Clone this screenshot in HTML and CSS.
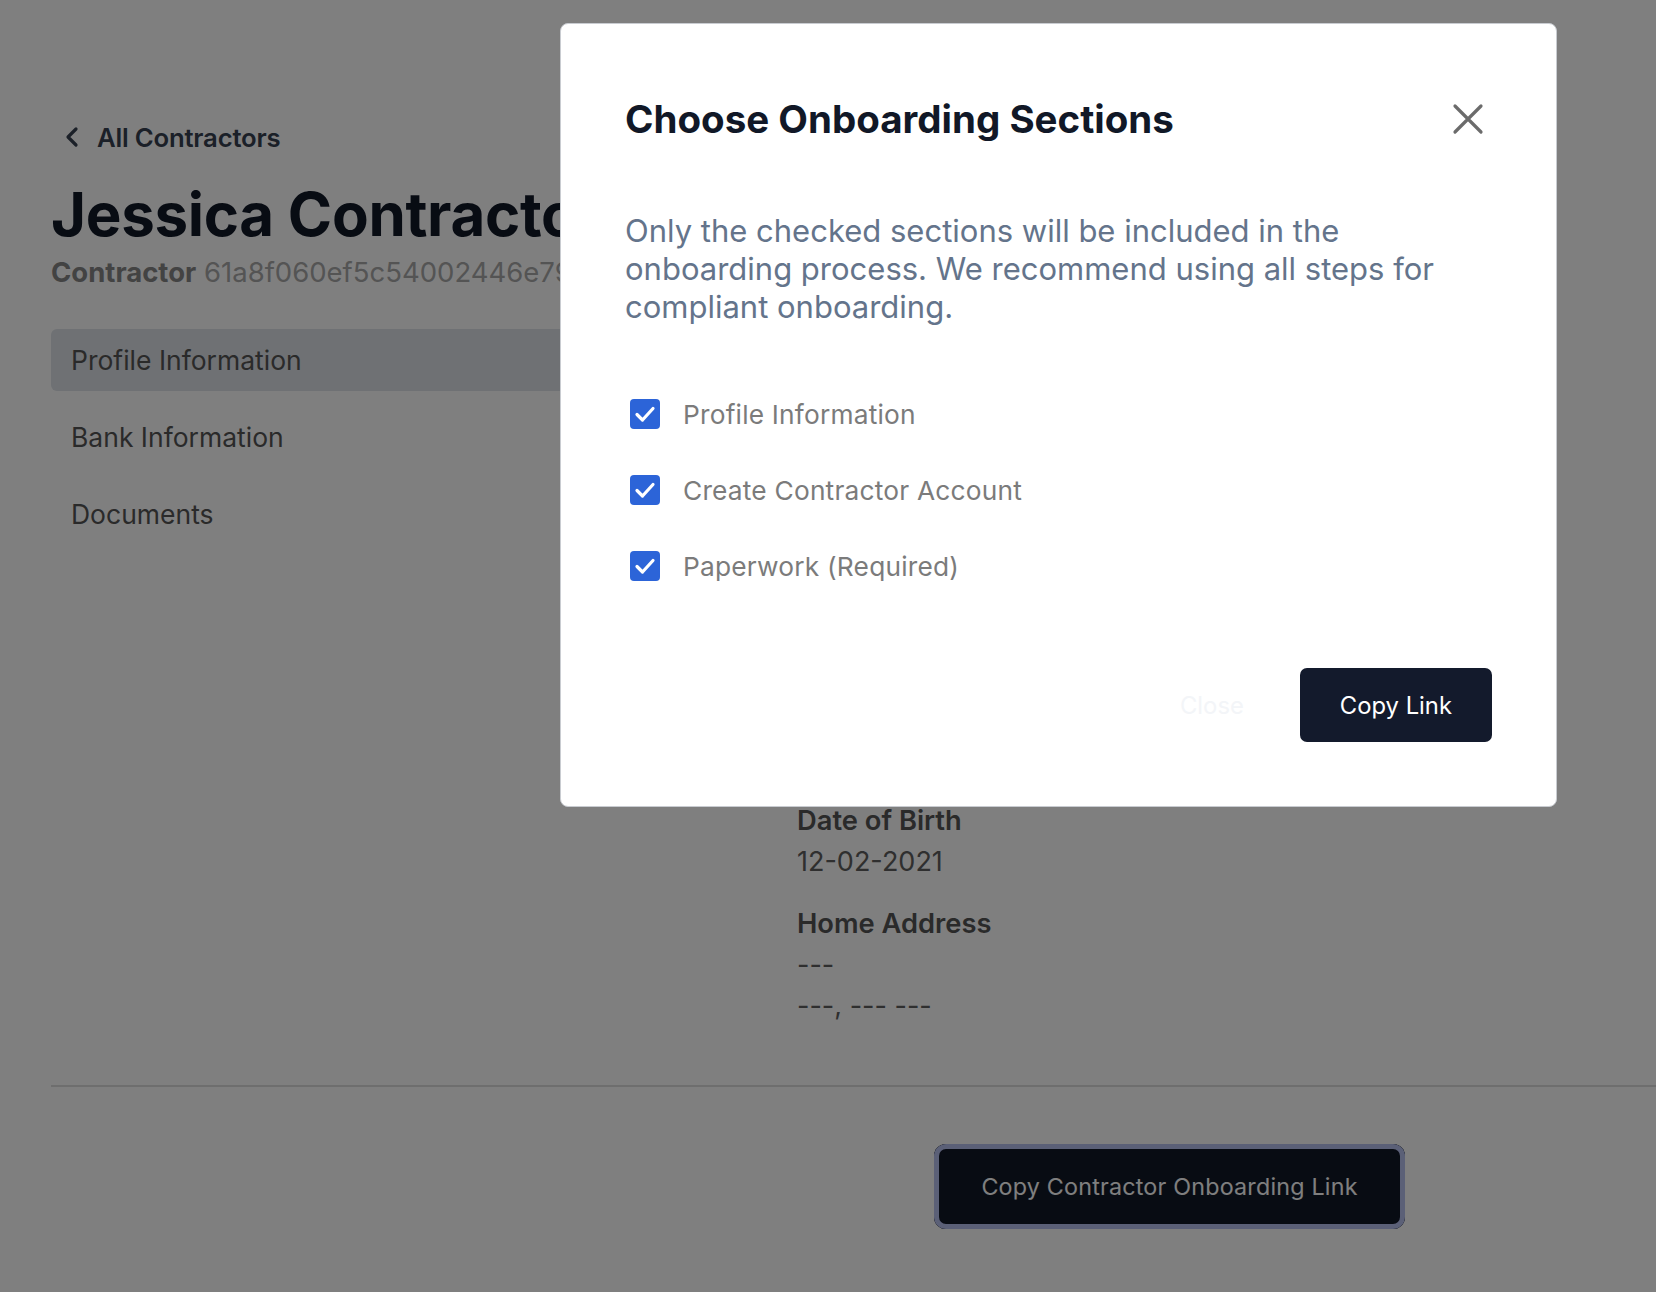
FILE: index.html
```html
<!DOCTYPE html>
<html lang="en">
<head>
<meta charset="utf-8">
<title>Jessica Contractor</title>
<link rel="stylesheet" href="styles.css">
</head>
<body>
<div class="page">
  <a class="back" href="#">
    <svg class="back-icon" viewBox="0 0 16 22" width="16" height="22"><path d="M12 3 L4 11 L12 19" fill="none" stroke="currentColor" stroke-width="3.2" stroke-linecap="round" stroke-linejoin="round"/></svg>
    <span>All Contractors</span>
  </a>
  <h1 class="name">Jessica Contractor</h1>
  <div class="sub"><strong>Contractor</strong> 61a8f060ef5c54002446e79b</div>

  <div class="main">
    <nav class="side">
      <div class="nav-item active">Profile Information</div>
      <div class="nav-item">Bank Information</div>
      <div class="nav-item">Documents</div>
    </nav>
    <section class="details">
      <div class="field"><div class="label">Date of Birth</div><div class="value">12-02-2021</div></div>
      <div class="field"><div class="label">Home Address</div><div class="value">---</div><div class="value">---, --- ---</div></div>
    </section>
  </div>

  <hr class="divider">
  <div class="footer">
    <button class="primary-big">Copy Contractor Onboarding Link</button>
  </div>
</div>

<div class="overlay"></div>

<div class="modal" role="dialog">
  <div class="modal-head">
    <h2 class="modal-title">Choose Onboarding Sections</h2>
    <button class="x-btn" aria-label="Close">
      <svg viewBox="0 0 40 40" width="40" height="40"><path d="M7 7 L33 33 M33 7 L7 33" fill="none" stroke="#6b6b6b" stroke-width="3.2" stroke-linecap="round"/></svg>
    </button>
  </div>
  <p class="modal-desc">Only the checked sections will be included in the onboarding process. We recommend using all steps for compliant onboarding.</p>
  <div class="checks">
    <label class="check-row"><span class="box"><svg viewBox="0 0 30 30" width="30" height="30"><path d="M7 15.5 L12.5 21 L23 9.5" fill="none" stroke="#fff" stroke-width="3.2" stroke-linecap="round" stroke-linejoin="round"/></svg></span><span class="check-label">Profile Information</span></label>
    <label class="check-row"><span class="box"><svg viewBox="0 0 30 30" width="30" height="30"><path d="M7 15.5 L12.5 21 L23 9.5" fill="none" stroke="#fff" stroke-width="3.2" stroke-linecap="round" stroke-linejoin="round"/></svg></span><span class="check-label">Create Contractor Account</span></label>
    <label class="check-row"><span class="box"><svg viewBox="0 0 30 30" width="30" height="30"><path d="M7 15.5 L12.5 21 L23 9.5" fill="none" stroke="#fff" stroke-width="3.2" stroke-linecap="round" stroke-linejoin="round"/></svg></span><span class="check-label">Paperwork (Required)</span></label>
  </div>
  <div class="modal-foot">
    <button class="ghost">Close</button>
    <button class="primary">Copy Link</button>
  </div>
</div>
</body>
</html>
```

FILE: styles.css
```css
* { box-sizing: border-box; }
html, body { margin: 0; padding: 0; }
body {
  background: #ffffff;
  font-family: Inter, "Noto Sans", "Liberation Sans", sans-serif;
  width: 1656px;
  height: 1292px;
  overflow: hidden;
}
.page {
  padding: 121px 0 0 51px;
}
.back {
  display: flex;
  align-items: center;
  gap: 17px;
  height: 32px;
  color: #374151;
  text-decoration: none;
  font-size: 25.7px;
  font-weight: 600;
  letter-spacing: -0.2px;
  margin-left: 13px;
}
.back-icon { display: block; }
.name {
  margin: 26px 0 0;
  font-size: 60px;
  line-height: 70px;
  font-weight: 700;
  color: #111827;
  letter-spacing: -0.3px;
  white-space: nowrap;
}
.sub {
  margin-top: 6px;
  font-size: 27.5px;
  line-height: 34px;
  color: #a8a8a8;
  white-space: nowrap;
}
.sub strong { color: #868686; font-weight: 700; }
.main {
  display: flex;
  margin-top: 40px;
}
.side {
  width: 680px;
  display: flex;
  flex-direction: column;
  gap: 15px;
  flex: none;
}
.nav-item {
  height: 62px;
  display: flex;
  align-items: center;
  padding-left: 20px;
  font-size: 26.5px;
  color: #555555;
  border-radius: 6px;
}
.nav-item.active { background: #dee2e8; }
.details {
  margin-left: 66px;
  padding-top: 475px;
  display: flex;
  flex-direction: column;
  gap: 28px;
}
.label {
  font-size: 27.3px;
  line-height: 34px;
  font-weight: 600;
  color: #555555;
}
.value {
  margin-top: 7px;
  font-size: 27px;
  line-height: 34px;
  color: #5e5e5e;
}
.divider {
  border: none;
  border-top: 2px solid #dcdcdc;
  margin: 62px 0 0;
}
.footer {
  display: flex;
  padding: 57px 0 0 883px;
}
.primary-big {
  width: 471px;
  height: 85px;
  background: #111827;
  color: #ffffff;
  border: none;
  border-radius: 12px;
  box-shadow: 0 0 0 5px #b6c0ee inset, 0 0 0 6px #111827 inset;
  font-family: inherit;
  font-size: 23.3px;
  letter-spacing: 0.2px;
}
.overlay {
  position: fixed;
  inset: 0;
  background: rgba(0, 0, 0, 0.5);
}
.modal {
  position: fixed;
  left: 560px;
  top: 23px;
  width: 997px;
  background: #ffffff;
  border: 1px solid #c9ccd1;
  border-radius: 8px;
  padding: 72px 64px 64px 64px;
}
.modal-head {
  display: flex;
  align-items: center;
  justify-content: space-between;
  height: 46px;
}
.modal-title {
  margin: 0;
  font-size: 38.5px;
  line-height: 46px;
  font-weight: 700;
  color: #111827;
  letter-spacing: 0;
}
.x-btn {
  border: none;
  background: none;
  padding: 0;
  width: 40px;
  height: 40px;
  margin-right: 4px;
}
.x-btn svg { display: block; }
.modal-desc {
  margin: 70px 0 0;
  font-size: 31px;
  line-height: 38px;
  color: #64748b;
}
.checks {
  margin-top: 71px;
  display: flex;
  flex-direction: column;
  gap: 42px;
}
.check-row {
  display: flex;
  align-items: center;
  height: 34px;
  padding-left: 5px;
}
.box {
  width: 30px;
  height: 30px;
  border-radius: 4px;
  background: #2c64d8;
  flex: none;
}
.box svg { display: block; }
.check-label {
  margin-left: 23px;
  font-size: 26.3px;
  color: #7b7b7b;
  letter-spacing: 0.2px;
}
.modal-foot {
  margin-top: 85px;
  display: flex;
  justify-content: flex-end;
  gap: 16px;
  margin-right: 0;
}
.ghost, .primary {
  height: 74px;
  padding: 0 40px;
  border: none;
  border-radius: 7px;
  font-family: inherit;
  font-size: 23.8px;
}
.ghost { background: #ffffff; color: #f3f5f8; }
.primary { background: #131a2c; color: #ffffff; }
```
